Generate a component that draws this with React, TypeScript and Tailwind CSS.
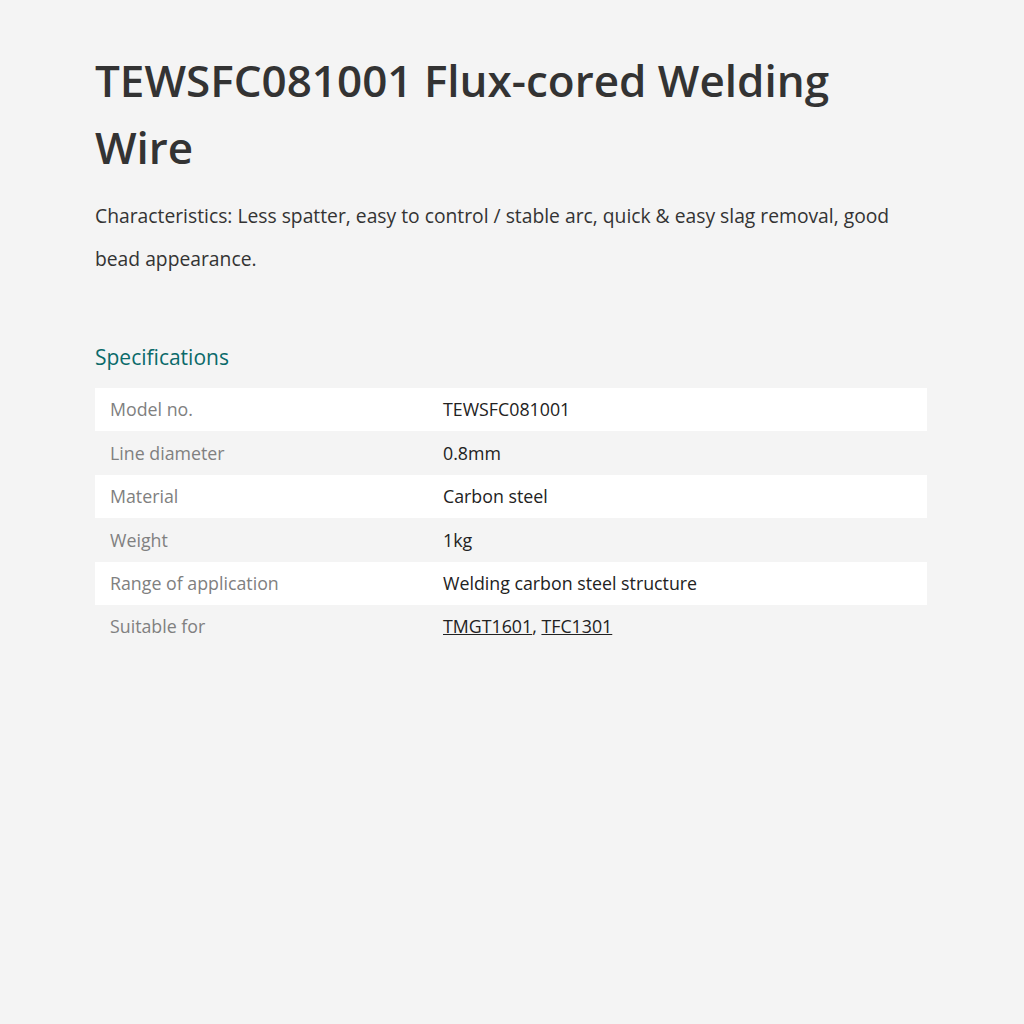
import React from "react";

const rows: { label: string; value: React.ReactNode }[] = [
  { label: "Model no.", value: "TEWSFC081001" },
  { label: "Line diameter", value: "0.8mm" },
  { label: "Material", value: "Carbon steel" },
  { label: "Weight", value: "1kg" },
  { label: "Range of application", value: "Welding carbon steel structure" },
  {
    label: "Suitable for",
    value: (
      <>
        <a href="#" className="underline">TMGT1601</a>, <a href="#" className="underline">TFC1301</a>
      </>
    ),
  },
];

export default function App() {
  return (
    <div className="min-h-screen w-full bg-[#f4f4f4] font-['Open_Sans',sans-serif] text-[#333]">
      <div className="ml-[95px] w-[832px] pt-[47px]">
        <h1 className="text-[44px] font-semibold leading-[67px] text-[#333]">
          TEWSFC081001 Flux-cored Welding Wire
        </h1>
        <p className="mt-[13px] text-[19.3px] leading-[43px] text-[#333]">
          Characteristics: Less spatter, easy to control / stable arc, quick &amp; easy slag removal, good bead appearance.
        </p>
        <h2 className="mt-[62px] text-[21px] leading-[30px] text-[#0a6a6a]">Specifications</h2>
        <div className="mt-[16px] flex flex-col">
          {rows.map((r, i) => (
            <div key={i} className={`flex h-[43.4px] items-center text-[17.8px] ${i % 2 === 0 ? "bg-white" : ""}`}>
              <div className="w-[333px] pl-[15px] text-[#808080]">{r.label}</div>
              <div className="pl-[15px] text-[#222]">{r.value}</div>
            </div>
          ))}
        </div>
      </div>
    </div>
  );
}
